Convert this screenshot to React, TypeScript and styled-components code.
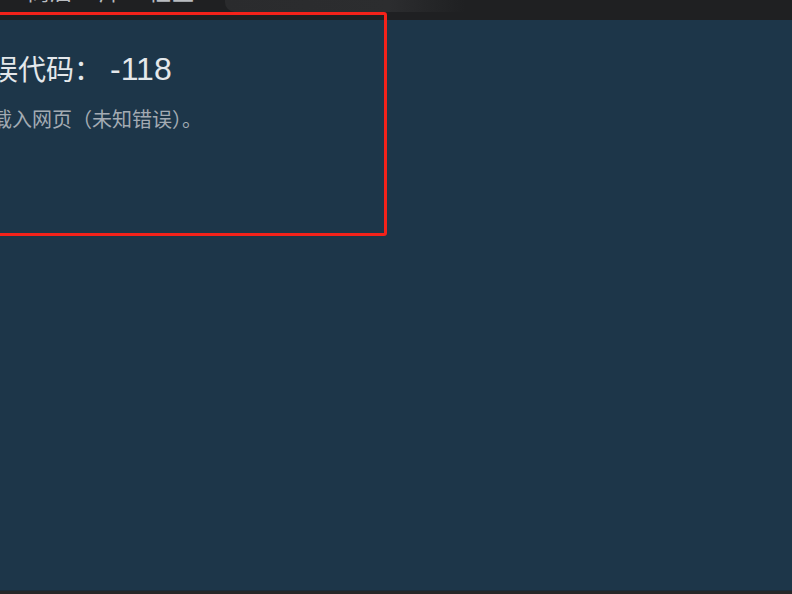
import styled, { createGlobalStyle } from 'styled-components';

const GlobalStyle = createGlobalStyle`
  html, body {
    margin: 0;
    padding: 0;
    background: #1f2022;
    overflow: hidden;
  }
`;

const App = () => {
  return (
    <Page>
      <GlobalStyle />
      <TopBar>
        <Nav>
          <NavItem>商店</NavItem>
          <NavItem>库</NavItem>
          <NavItem>社区</NavItem>
        </Nav>
        <HoverTab />
      </TopBar>
      <Content>
        <ErrorPanel>
          <ErrorTitle>
            错误代码：<Code>-118</Code>
          </ErrorTitle>
          <ErrorText>无法载入网页（未知错误）。</ErrorText>
        </ErrorPanel>
      </Content>
      <BottomEdge />
      <Highlight />
    </Page>
  );
};

const Page = styled.div`
  position: relative;
  display: flex;
  flex-direction: column;
  width: 792px;
  height: 594px;
  overflow: hidden;
  background: #1f2022;
  font-family: 'Liberation Sans', Arial, 'Noto Sans CJK SC', sans-serif;
`;

const TopBar = styled.div`
  display: flex;
  align-items: flex-start;
  height: 20px;
  flex-shrink: 0;
  background: #1f2022;
  overflow: hidden;
`;

const Nav = styled.div`
  display: flex;
  gap: 26px;
  padding-left: 27px;
  margin-top: -20px;
`;

const NavItem = styled.div`
  font-size: 23px;
  line-height: 24px;
  color: #b9bcc0;
  white-space: nowrap;
`;

const HoverTab = styled.div`
  margin-left: 31px;
  width: 240px;
  height: 12px;
  border-bottom-left-radius: 10px;
  background: linear-gradient(90deg, #2a2b2d 0%, #2c2d2f 68%, #252628 85%, #1f2022 100%);
`;

const Content = styled.div`
  flex: 1;
  background: #1d3649;
  padding-top: 32px;
`;

const ErrorPanel = styled.div`
  display: flex;
  flex-direction: column;
  gap: 19px;
  margin-left: -38px;
`;

const ErrorTitle = styled.div`
  font-size: 28px;
  line-height: 34px;
  color: #e4e8eb;
  white-space: nowrap;
`;

const Code = styled.span`
  font-size: 32px;
  margin-left: 8px;
`;

const ErrorText = styled.div`
  font-size: 20px;
  line-height: 26px;
  color: #a3abb3;
  white-space: nowrap;
  margin-left: -10px;
`;

const BottomEdge = styled.div`
  height: 3px;
  flex-shrink: 0;
  background: #262728;
  border-top: 1px solid #1b2c3a;
`;

/* red annotation frame drawn over the screenshot */
const Highlight = styled.div`
  position: absolute;
  top: 12px;
  left: -20px;
  width: 401px;
  height: 218px;
  border: 3px solid #f4221a;
  border-radius: 3px;
  pointer-events: none;
`;

export default App;
